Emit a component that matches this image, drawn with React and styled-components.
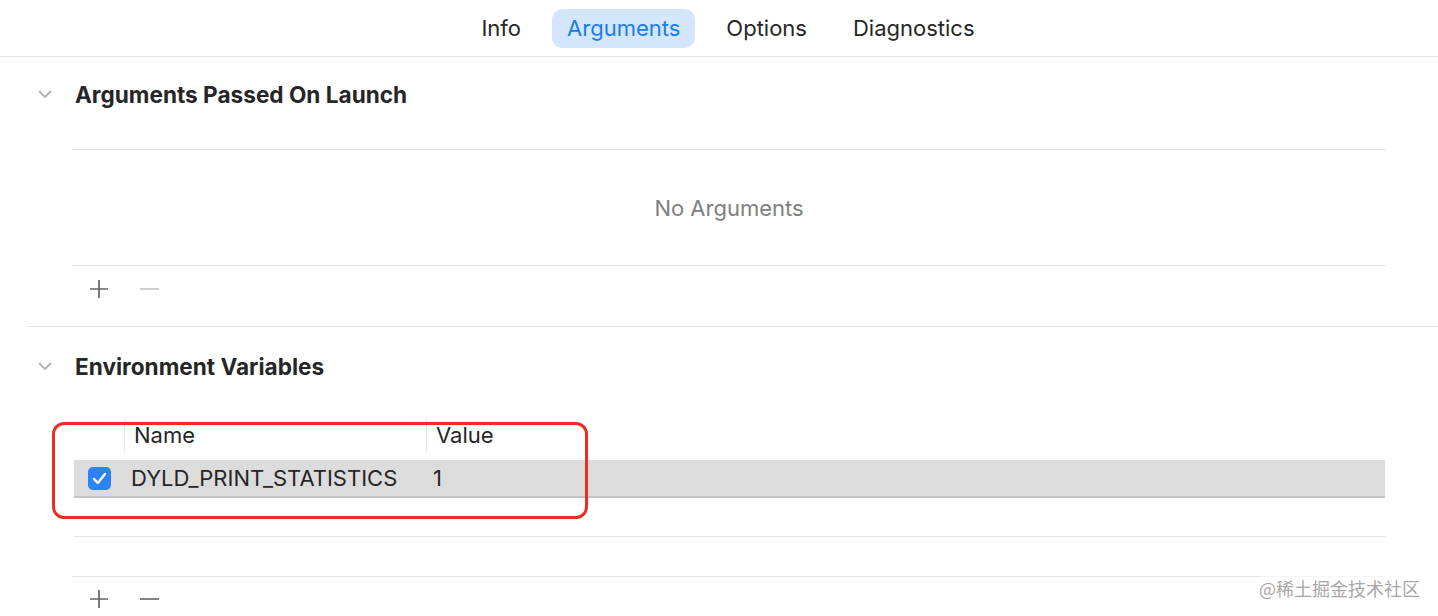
import React from "react";
import styled, { createGlobalStyle } from "styled-components";

const Global = createGlobalStyle`
  html, body { margin: 0; padding: 0; background: #ffffff; }
  body { font-family: Inter, "Noto Sans", "Noto Sans CJK SC", sans-serif; color: #262626; }
  #root { width: 1438px; height: 616px; overflow: hidden; position: relative; }
`;

const Page = styled.div`
  width: 1438px;
  height: 616px;
  position: relative;
  overflow: hidden;
  background: #fff;
`;

const TabBar = styled.div`
  height: 56px;
  border-bottom: 1px solid #e4e4e4;
  display: flex;
  justify-content: center;
  align-items: center;
  gap: 16px;
  padding-left: 18px;
`;

const Tab = styled.div`
  height: 39px;
  padding: 0 15px;
  display: flex;
  align-items: center;
  font-size: 22px;
  border-radius: 10px;
  color: ${(p) => (p.$active ? "#1b7cf2" : "#262626")};
  background: ${(p) => (p.$active ? "#d4e6fb" : "transparent")};
`;

const Section = styled.section`
  margin-left: 28px;
  border-bottom: ${(p) => (p.$divider ? "1px solid #e4e4e4" : "none")};
  padding-bottom: ${(p) => p.$padBottom || 0}px;
`;

const SectionHeader = styled.div`
  height: ${(p) => p.$h}px;
  display: flex;
  align-items: center;
  gap: 23px;
  padding-left: 10px;
`;

const Heading = styled.h2`
  margin: 0;
  font-size: 22.6px;
  font-weight: 700;
  color: #262626;
`;

const Chevron = () => (
  <svg width="14" height="9" viewBox="0 0 14 9">
    <path d="M1.5 1.5 L7 7 L12.5 1.5" fill="none" stroke="#b4b4b4" strokeWidth="2" strokeLinecap="round" strokeLinejoin="round" />
  </svg>
);

const Content = styled.div`
  margin-left: 44px;
  width: 1314px;
`;

const EmptyTable = styled.div`
  margin-top: 18px;
  height: 115px;
  border-top: 1px solid #e4e4e4;
  border-bottom: 1px solid #e4e4e4;
  display: flex;
  align-items: center;
  justify-content: center;
  font-size: 22px;
  color: #808080;
`;

const Toolbar = styled.div`
  height: ${(p) => p.$h}px;
  display: flex;
  align-items: center;
  gap: 30px;
  padding-left: 16px;
`;

const IconButton = styled.span`
  display: inline-flex;
  width: 21px;
  height: 21px;
  align-items: center;
  justify-content: center;
`;

const PlusIcon = ({ color = "#666666" }) => (
  <svg width="20" height="20" viewBox="0 0 20 20">
    <path d="M10 1 V19 M1 10 H19" stroke={color} strokeWidth="1.7" />
  </svg>
);

const MinusIcon = ({ color = "#666666" }) => (
  <svg width="22" height="20" viewBox="0 0 22 20">
    <path d="M1 10 H21" stroke={color} strokeWidth="1.7" />
  </svg>
);

const Grid = styled.div`
  display: grid;
  grid-template-columns: 50px 302px 1fr;
  margin-left: 2px;
  width: 1311px;
`;

const HeaderGrid = styled(Grid)`
  margin-top: 13px;
  height: 34px;
  margin-bottom: 8px;
`;

const HeaderCell = styled.div`
  display: flex;
  align-items: center;
  padding-left: 9px;
  font-size: 22px;
  color: #262626;
  border-left: ${(p) => (p.$first ? "none" : "1px solid #e6e6e6")};
`;

const DataRow = styled(Grid)`
  height: 36px;
  background: #dcdcdc;
  border-bottom: 2px solid #c4c4c4;
  align-items: center;
`;

const DataCell = styled.div`
  display: flex;
  align-items: center;
  padding-left: ${(p) => p.$pad}px;
  font-size: 22px;
  color: #262626;
`;

const EmptyRow = styled.div`
  height: ${(p) => p.$h}px;
  border-bottom: 1px solid #e4e4e4;
  margin-left: ${(p) => p.$ml || 0}px;
`;

const Checkbox = styled.span`
  width: 23px;
  height: 23px;
  border-radius: 5px;
  background: #2c83f6;
  display: inline-flex;
  align-items: center;
  justify-content: center;
`;

const Annotation = styled.div`
  position: absolute;
  left: 52px;
  top: 422px;
  width: 530px;
  height: 91px;
  border: 3px solid #ec2d24;
  border-radius: 12px;
  pointer-events: none;
`;

const Watermark = styled.div`
  position: absolute;
  right: 18px;
  top: 575px;
  font-size: 18px;
  color: #a8a8a8;
  font-family: "Noto Sans CJK SC", sans-serif;
  background: rgba(255, 255, 255, 0.6);
`;

export default function App() {
  return (
    <Page>
      <Global />
      <TabBar>
        <Tab>Info</Tab>
        <Tab $active>Arguments</Tab>
        <Tab>Options</Tab>
        <Tab>Diagnostics</Tab>
      </TabBar>

      <Section $divider $padBottom={14}>
        <SectionHeader $h={74}>
          <Chevron />
          <Heading>Arguments Passed On Launch</Heading>
        </SectionHeader>
        <Content>
          <EmptyTable>No Arguments</EmptyTable>
          <Toolbar $h={46}>
            <IconButton><PlusIcon /></IconButton>
            <IconButton><MinusIcon color="#c4c4c4" /></IconButton>
          </Toolbar>
        </Content>
      </Section>

      <Section>
        <SectionHeader $h={78}>
          <Chevron />
          <Heading>Environment Variables</Heading>
        </SectionHeader>
        <Content>
          <HeaderGrid>
            <HeaderCell $first />
            <HeaderCell>Name</HeaderCell>
            <HeaderCell>Value</HeaderCell>
          </HeaderGrid>
          <DataRow>
            <DataCell $pad={14}>
              <Checkbox>
                <svg width="15" height="13" viewBox="0 0 15 13">
                  <path d="M2 7 L5.8 11 L13 2" fill="none" stroke="#fff" strokeWidth="2.4" strokeLinecap="round" strokeLinejoin="round" />
                </svg>
              </Checkbox>
            </DataCell>
            <DataCell $pad={7}>DYLD_PRINT_STATISTICS</DataCell>
            <DataCell $pad={7}>1</DataCell>
          </DataRow>
          <EmptyRow $h={38} $ml={2} />
          <EmptyRow $h={39} />
          <Toolbar $h={44}>
            <IconButton><PlusIcon /></IconButton>
            <IconButton><MinusIcon /></IconButton>
          </Toolbar>
        </Content>
      </Section>

      <Annotation />
      <Watermark>@稀土掘金技术社区</Watermark>
    </Page>
  );
}
